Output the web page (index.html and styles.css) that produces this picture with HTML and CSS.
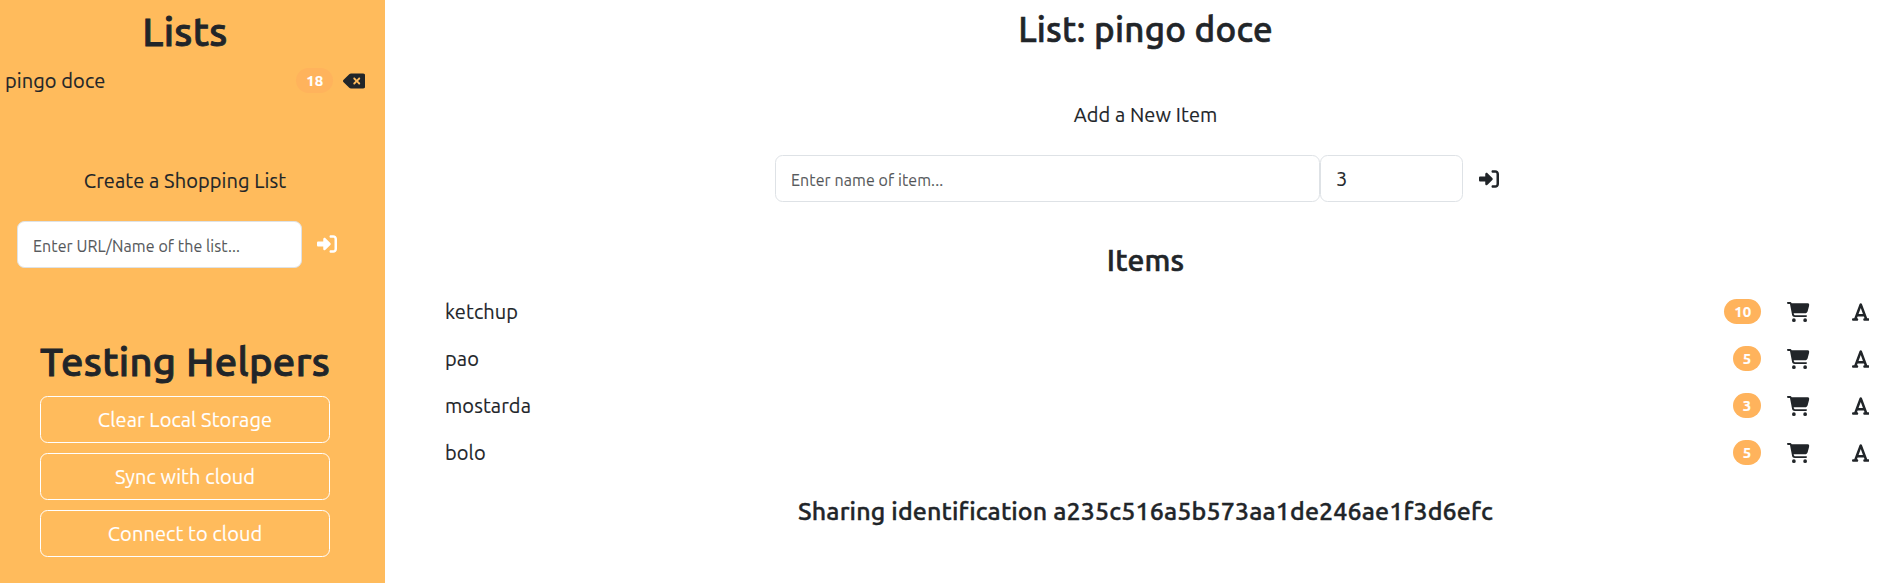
FILE: index.html
```html
<!DOCTYPE html>
<html lang="en">
<head>
<meta charset="utf-8">
<title>Shopping Lists</title>
<link rel="stylesheet" href="styles.css">
</head>
<body>
<svg class="sprite" aria-hidden="true">
  <symbol id="enter" viewBox="0 0 512 512"><path d="M217.9 105.9L340.7 228.7c7.2 7.2 11.3 17.1 11.3 27.3s-4.1 20.1-11.3 27.3L217.9 406.1c-6.4 6.4-15 9.9-24 9.9c-18.7 0-33.9-15.2-33.9-33.9l0-62.1L32 320c-17.7 0-32-14.3-32-32l0-64c0-17.7 14.3-32 32-32l128 0 0-62.1c0-18.7 15.2-33.9 33.9-33.9c9 0 17.6 3.6 24 9.9zM352 416l64 0c17.7 0 32-14.3 32-32l0-256c0-17.7-14.3-32-32-32l-64 0c-17.7 0-32-14.3-32-32s14.3-32 32-32l64 0c53 0 96 43 96 96l0 256c0 53-43 96-96 96l-64 0c-17.7 0-32-14.3-32-32s14.3-32 32-32z"/></symbol>
  <symbol id="cart" viewBox="0 0 576 512"><path d="M0 24C0 10.7 10.7 0 24 0L69.5 0c22 0 41.5 12.8 50.6 32l411 0c26.3 0 45.5 25 38.6 50.4l-41 152.3c-8.5 31.4-37 53.3-69.5 53.3l-288.5 0 5.4 28.5c2.2 11.3 12.1 19.5 23.6 19.5L488 336c13.3 0 24 10.7 24 24s-10.7 24-24 24l-288.3 0c-34.6 0-64.3-24.6-70.7-58.5L77.4 54.5c-.7-3.8-4-6.5-7.9-6.5L24 48C10.7 48 0 37.3 0 24zM128 464a48 48 0 1 1 96 0 48 48 0 1 1 -96 0zm336-48a48 48 0 1 1 0 96 48 48 0 1 1 0-96z"/></symbol>
  <symbol id="font" viewBox="0 0 448 512"><path d="M254 52.8C249.3 40.3 237.3 32 224 32s-25.3 8.3-30 20.8L57.8 416 32 416c-17.7 0-32 14.3-32 32s14.3 32 32 32l96 0c17.7 0 32-14.3 32-32s-14.3-32-32-32l-1.8 0 18-48 159.6 0 18 48-1.8 0c-17.7 0-32 14.3-32 32s14.3 32 32 32l96 0c17.7 0 32-14.3 32-32s-14.3-32-32-32l-25.8 0L254 52.8zM279.8 304l-111.6 0L224 155.1 279.8 304z"/></symbol>
  <symbol id="delete" viewBox="0 0 576 512"><path d="M576 128c0-35.3-28.7-64-64-64L205.3 64c-17 0-33.3 6.7-45.3 18.7L9.4 233.4c-6 6-9.4 14.1-9.4 22.6s3.4 16.6 9.4 22.6L160 429.3c12 12 28.3 18.7 45.3 18.7L512 448c35.3 0 64-28.7 64-64l0-256zM271 175c9.4-9.4 24.6-9.4 33.9 0l47 47 47-47c9.4-9.4 24.6-9.4 33.9 0s9.4 24.6 0 33.9l-47 47 47 47c9.4 9.4 9.4 24.6 0 33.9s-24.6 9.4-33.9 0l-47-47-47 47c-9.4 9.4-24.6 9.4-33.9 0s-9.4-24.6 0-33.9l47-47-47-47c-9.4-9.4-9.4-24.6 0-33.9z"/></symbol>
</svg>
<div class="app">
  <aside class="sidebar">
    <h1 class="title">Lists</h1>
    <div class="list-row">
      <span class="list-name">pingo doce</span>
      <span class="badge">18</span>
      <svg class="icon wide"><use href="#delete"/></svg>
    </div>
    <p class="caption create">Create a Shopping List</p>
    <form class="create-form">
      <input class="field" type="text" placeholder="Enter URL/Name of the list...">
      <svg class="icon light"><use href="#enter"/></svg>
    </form>
    <section class="helpers">
      <h1 class="title">Testing Helpers</h1>
      <button class="btn">Clear Local Storage</button>
      <button class="btn">Sync with cloud</button>
      <button class="btn">Connect to cloud</button>
    </section>
  </aside>
  <main class="main">
    <h3 class="list-title">List: pingo doce</h3>
    <p class="caption add">Add a New Item</p>
    <form class="add-form">
      <input class="field" type="text" placeholder="Enter name of item...">
      <input class="field qty" type="text" value="3">
      <svg class="icon"><use href="#enter"/></svg>
    </form>
    <h4 class="items-title">Items</h4>
    <ul class="items">
      <li class="item"><span class="item-name">ketchup</span><span class="badge">10</span><svg class="icon wide"><use href="#cart"/></svg><svg class="icon narrow"><use href="#font"/></svg></li>
      <li class="item"><span class="item-name">pao</span><span class="badge">5</span><svg class="icon wide"><use href="#cart"/></svg><svg class="icon narrow"><use href="#font"/></svg></li>
      <li class="item"><span class="item-name">mostarda</span><span class="badge">3</span><svg class="icon wide"><use href="#cart"/></svg><svg class="icon narrow"><use href="#font"/></svg></li>
      <li class="item"><span class="item-name">bolo</span><span class="badge">5</span><svg class="icon wide"><use href="#cart"/></svg><svg class="icon narrow"><use href="#font"/></svg></li>
    </ul>
    <h5 class="sharing">Sharing identification a235c516a5b573aa1de246ae1f3d6efc</h5>
  </main>
</div>
</body>
</html>
```
FILE: styles.css
```css
* { box-sizing: border-box; margin: 0; padding: 0; }
html { font-size: 20px; }
body {
  font-family: Ubuntu, "Noto Sans", sans-serif;
  font-size: 20px;
  font-weight: 400;
  letter-spacing: 0.09px;
  line-height: 1.5;
  color: #212529;
  background: #fff;
  -webkit-text-stroke: 0.15px currentColor;
  overflow: hidden;
}
h1, h3, h4, h5 {
  font-weight: 500;
  line-height: 1.2;
  text-align: center;
  white-space: nowrap;
  -webkit-text-stroke: 0.6px currentColor;
}
.sprite { display: none; }
.app { display: grid; grid-template-columns: 385px 1fr; height: 583px; }

.sidebar { background: #ffbb5c; padding: 7.5px 15px 0 0; }
.title { font-size: 40px; margin-bottom: 10px; letter-spacing: 0.3px; -webkit-text-stroke-width: 0.9px; }
.list-row { display: flex; align-items: center; height: 30px; padding: 0 5px; }
.list-name { flex: 1; }
.list-row .icon { margin-left: 9.5px; }
.caption { text-align: center; }
.create { margin-top: 70px; }
.create-form { display: flex; align-items: center; margin: 25px 0 0 17px; }
.create-form .field { width: 285px; }
.create-form .icon { margin-left: 15px; }
.helpers { display: flex; flex-direction: column; width: 290px; margin: 70.5px auto 0 40px; }
.helpers .title { margin-left: -5px; margin-right: -5px; }

.btn {
  height: 47px;
  margin-bottom: 10px;
  border: 1px solid #fff;
  border-radius: 7.5px;
  background: transparent;
  color: #fff;
  font: inherit;
  letter-spacing: inherit;
}
.field {
  height: 47px;
  padding: 7.5px 15px;
  border: 1px solid #dee2e6;
  border-radius: 7.5px;
  background: #fff;
  color: #212529;
  font: inherit;
  letter-spacing: inherit;
  outline: none;
}
.field::placeholder { font-size: 16px; color: rgba(33, 37, 41, 0.75); opacity: 1; }
.badge {
  padding: 5.25px 9.75px;
  border-radius: 16px;
  background: #ffb35c;
  color: #fff;
  font-size: 15px;
  font-weight: 700;
  line-height: 1;
}
.icon { width: 20px; height: 20px; fill: currentColor; flex: none; }
.icon.wide { width: 22.5px; }
.icon.narrow { width: 17.5px; }
.icon.light { color: #fff; }

.main { padding: 7.5px 0 0 23px; }
.list-title { font-size: 35px; letter-spacing: 0.23px; }
.add { margin-top: 50px; }
.add-form { display: flex; align-items: center; margin: 25.5px 0 0 367px; }
.add-form .field { width: 545px; }
.add-form .qty { width: 143px; }
.add-form .icon { margin-left: 16px; }
.items-title { font-size: 30px; margin: 40px 0 10px; letter-spacing: 0.2px; }
.items { list-style: none; }
.item { display: flex; align-items: center; height: 47px; padding: 0 14px 0 37px; }
.item-name { flex: 1; }
.item .wide { margin-left: 26px; }
.item .narrow { margin-left: 42px; }
.sharing { font-size: 25px; margin-top: 20px; letter-spacing: 0.13px; -webkit-text-stroke-width: 0.4px; }
```
